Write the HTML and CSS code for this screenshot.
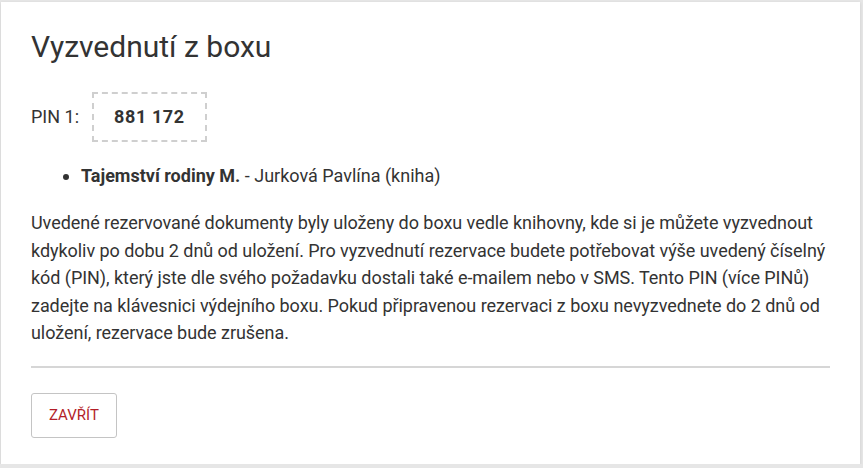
FILE: index.html
```html
<!DOCTYPE html>
<html lang="cs">
<head>
<meta charset="utf-8">
<title>Vyzvednutí z boxu</title>
<link rel="stylesheet" href="styles.css">
</head>
<body>
<div class="modal">
  <h1 class="title">Vyzvednutí z boxu</h1>
  <div class="pin-row">
    <span class="pin-label">PIN 1:</span>
    <span class="pin-box">881 172</span>
  </div>
  <ul class="items">
    <li><strong>Tajemství rodiny M.</strong> - Jurková Pavlína (kniha)</li>
  </ul>
  <p class="info">Uvedené rezervované dokumenty byly uloženy do boxu vedle knihovny, kde si je můžete vyzvednout kdykoliv po dobu 2 dnů od uložení. Pro vyzvednutí rezervace budete potřebovat výše uvedený číselný kód (PIN), který jste dle svého požadavku dostali také e-mailem nebo v SMS. Tento PIN (více PINů) zadejte na klávesnici výdejního boxu. Pokud připravenou rezervaci z boxu nevyzvednete do 2 dnů od uložení, rezervace bude zrušena.</p>
  <hr class="divider">
  <div class="actions">
    <button class="btn-close" type="button">Zavřít</button>
  </div>
</div>
</body>
</html>
```
FILE: styles.css
```css
html, body {
  margin: 0;
  padding: 0;
}
body {
  background: #e6e6e6;
  font-family: Roboto, "Liberation Sans", Arial, sans-serif;
  color: #333;
  font-size: 18px;
  line-height: 27.4px;
}
.modal {
  background: #fff;
  margin: 2px 3px 0 1px;
  height: 462px;
  box-sizing: border-box;
  padding: 27px 30px 0 30px;
  box-shadow: 0 1px 3px rgba(0,0,0,0.12);
}
.title {
  margin: 0;
  font-size: 30px;
  font-weight: 400;
  line-height: 35px;
  color: #333;
}
.pin-row {
  display: flex;
  align-items: center;
  margin-top: 28px;
}
.pin-label {
  margin-right: 13px;
}
.pin-box {
  border: 2px dashed #cfcfcf;
  padding: 12px 20px;
  line-height: 22px;
  font-weight: 700;
  letter-spacing: 0.6px;
}
.items {
  margin: 20px 0 0 0;
  padding-left: 50px;
}
.info {
  margin: 20px 0 0 0;
  letter-spacing: -0.05px;
}
.divider {
  border: 0;
  border-top: 2px solid #d6d6d6;
  margin: 20px 0 0 0;
}
.actions {
  margin-top: 25px;
}
.btn-close {
  font-family: inherit;
  font-size: 15px;
  line-height: 19px;
  text-transform: uppercase;
  color: #b31e28;
  background: #fff;
  border: 1px solid #c4c4c4;
  border-radius: 3px;
  padding: 12px 17px;
  cursor: pointer;
}
```
